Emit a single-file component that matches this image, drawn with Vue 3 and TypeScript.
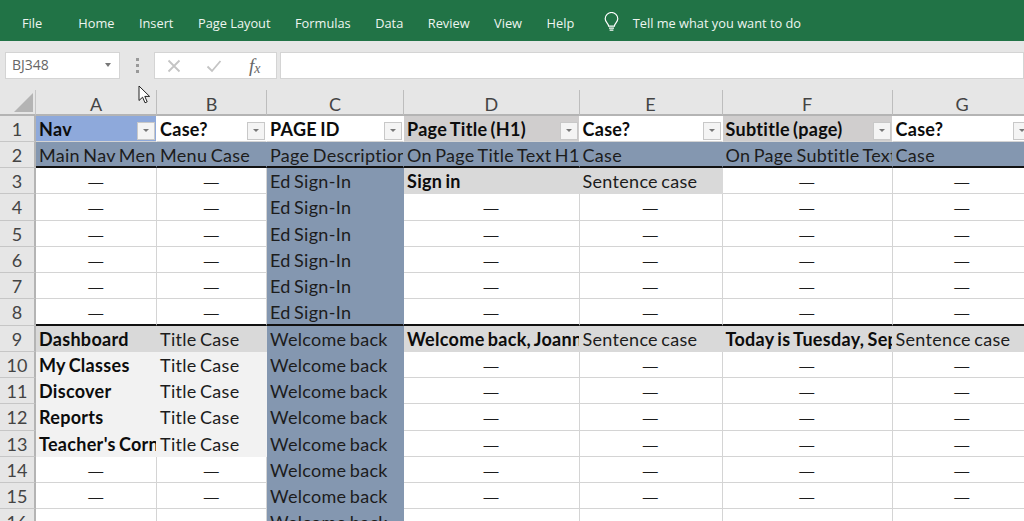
<script setup lang="ts">
type Cell = { t?: string; cls?: string };
const D = '—';
const columns = ['A', 'B', 'C', 'D', 'E', 'F', 'G'];
const tabs = ['Home', 'Insert', 'Page Layout', 'Formulas', 'Data', 'Review', 'View', 'Help'];

function c(t: string, cls = ''): Cell {
  return { t, cls };
}
function dash(): Cell {
  return c(D, 'ctr');
}
function blank(page: string): Cell[] {
  return [dash(), dash(), c(page, 'blue'), dash(), dash(), dash(), dash()];
}
function nav(label: string, page: string, strong = false): Cell[] {
  const tone = strong ? 'gray' : 'light';
  return [
    c(label, `b ${tone}`),
    c('Title Case', tone),
    c(page, 'blue'),
    ...(strong
      ? [c('Welcome back, Joanne', 'b gray'), c('Sentence case', 'gray'), c('Today is Tuesday, September', 'b gray'), c('Sentence case', 'gray')]
      : [dash(), dash(), dash(), dash()]),
  ];
}

const rows: Cell[][] = [
  [c('Nav', 'b head nav'), c('Case?', 'b head'), c('PAGE ID', 'b head'), c('Page Title (H1)', 'b head mid'), c('Case?', 'b head'), c('Subtitle (page)', 'b head mid'), c('Case?', 'b head')],
  ['Main Nav Menu', 'Menu Case', 'Page Description', 'On Page Title Text H1', 'Case', 'On Page Subtitle Text', 'Case'].map((t) => c(t, 'blue line')),
  [dash(), dash(), c('Ed Sign-In', 'blue'), c('Sign in', 'b gray'), c('Sentence case', 'gray'), dash(), dash()],
  blank('Ed Sign-In'),
  blank('Ed Sign-In'),
  blank('Ed Sign-In'),
  blank('Ed Sign-In'),
  blank('Ed Sign-In').map((x) => ({ ...x, cls: `${x.cls} line` })),
  nav('Dashboard', 'Welcome back', true),
  nav('My Classes', 'Welcome back'),
  nav('Discover', 'Welcome back'),
  nav('Reports', 'Welcome back'),
  nav("Teacher's Corner", 'Welcome back'),
  blank('Welcome back'),
  blank('Welcome back'),
  [c(''), c(''), c('Welcome back', 'blue'), c(''), c(''), c(''), c('')],
];
</script>

<template>
  <div class="app">
    <header class="ribbon">
      <span class="file">File</span>
      <span v-for="t in tabs" :key="t" class="tab">{{ t }}</span>
      <svg class="bulb" width="17" height="20" viewBox="0 0 17 20" fill="none" stroke="#fff" stroke-width="1.2">
        <path d="M5.6 14.2c0-2.4-3.4-3.9-3.4-7.4a6.3 6.3 0 0 1 12.6 0c0 3.5-3.4 5-3.4 7.4z" />
        <path d="M6 16.2h5M6.6 18.2h3.8" />
      </svg>
      <span class="tell">Tell me what you want to do</span>
    </header>

    <section class="formula">
      <div class="namebox">
        <span>BJ348</span>
        <i class="caret"></i>
      </div>
      <div class="grip"><b></b><b></b><b></b></div>
      <div class="fxbox">
        <svg width="14" height="14" viewBox="0 0 14 14" stroke="#c4c4c4" stroke-width="1.8" fill="none">
          <path d="M1.5 1.5l11 11M12.5 1.5l-11 11" />
        </svg>
        <svg width="16" height="14" viewBox="0 0 16 14" stroke="#c4c4c4" stroke-width="1.8" fill="none">
          <path d="M1.5 7.5l4.5 4.5 8.5-10" />
        </svg>
        <span class="fx">f<sub>x</sub></span>
      </div>
      <div class="input"></div>
    </section>

    <section class="sheet">
      <div class="corner"><i></i></div>
      <div v-for="col in columns" :key="col" class="colhead">{{ col }}</div>
      <template v-for="(row, r) in rows" :key="r">
        <div class="rowhead">{{ r + 1 }}</div>
        <div v-for="(cell, i) in row" :key="i" class="cell" :class="cell.cls">
          <span class="txt">{{ cell.t }}</span>
          <i v-if="r === 0" class="filter"><em></em></i>
        </div>
      </template>
    </section>

    <svg class="cursor" width="14" height="20" viewBox="0 0 14 20">
      <path d="M1 1v14.5l3.6-3.3 2.4 5.6 2.2-1-2.4-5.4h4.8z" fill="#fff" stroke="#222" stroke-width="1" />
    </svg>
  </div>
</template>

<style scoped>
.app {
  position: relative;
  width: 1024px;
  height: 521px;
  overflow: hidden;
  background: #e6e6e6;
  display: flex;
  flex-direction: column;
}
.ribbon {
  height: 41px;
  flex: none;
  box-sizing: border-box;
  background: #217346;
  color: #eef5f0;
  display: flex;
  align-items: center;
  padding: 5px 0 0 22px;
  font: 12.8px "Open Sans", sans-serif;
}
.file {
  margin-right: 36px;
}
.tab {
  margin-right: 24.5px;
}
.bulb {
  margin: -3px 13px 0 4px;
}
.formula {
  height: 49px;
  flex: none;
  box-sizing: border-box;
  padding: 11px 0 11px 5px;
  display: flex;
  align-items: stretch;
}
.namebox {
  width: 115px;
  box-sizing: border-box;
  background: #fff;
  border: 1px solid #d4d4d4;
  display: flex;
  align-items: center;
  justify-content: space-between;
  padding: 0 8px 2px 6px;
  color: #666;
  font: 14px "Open Sans", sans-serif;
}
.caret {
  border: 3.5px solid transparent;
  border-top: 4px solid #777;
  border-bottom: 0;
}
.grip {
  width: 34px;
  display: flex;
  flex-direction: column;
  align-items: center;
  justify-content: center;
  gap: 3px;
}
.grip b {
  width: 3px;
  height: 3px;
  background: #999;
}
.fxbox {
  width: 123px;
  box-sizing: border-box;
  background: #fff;
  border: 1px solid #d4d4d4;
  display: flex;
  align-items: center;
  gap: 25px;
  padding: 0 0 0 12px;
}
.fx {
  margin-left: 2px;
  font: italic 19px "Liberation Serif", serif;
  color: #666;
}
.fx sub {
  font-size: 14px;
  vertical-align: -1px;
}
.input {
  flex: 1;
  margin-left: 3px;
  background: #fff;
  border: 1px solid #d4d4d4;
}
.sheet {
  display: grid;
  grid-template-columns: 36px 121px 110px 137px 175.5px 143px 170px 140px;
  grid-template-rows: 25.5px;
  grid-auto-rows: 26.25px;
  background: #fff;
  font: 18px Lato, sans-serif;
  color: #1c1c1c;
}
.corner {
  background: #e6e6e6;
  border-right: 1px solid #c6c6c6;
  border-bottom: 2px solid #b4b4b4;
  box-sizing: border-box;
  position: relative;
}
.corner i {
  position: absolute;
  right: 2px;
  bottom: 2px;
  width: 0;
  height: 0;
  border-left: 19px solid transparent;
  border-bottom: 19px solid #b4b4b4;
}
.colhead {
  background: #e6e6e6;
  border-right: 1px solid #bdbdbd;
  border-bottom: 2px solid #b4b4b4;
  box-sizing: border-box;
  text-align: center;
  line-height: 28px;
  color: #444;
}
.rowhead {
  background: #e6e6e6;
  border-right: 2px solid #b4b4b4;
  border-bottom: 1px solid #c6c6c6;
  box-sizing: border-box;
  text-align: center;
  line-height: 27px;
  color: #444;
}
.cell {
  position: relative;
  box-sizing: border-box;
  overflow: hidden;
  white-space: nowrap;
  border-right: 1px solid #d4d4d4;
  border-bottom: 1px solid #d4d4d4;
  padding-left: 3px;
  line-height: 27px;
}
.txt {
  letter-spacing: 0.3px;
  word-spacing: -1.5px;
}
.b {
  font-weight: 700;
  color: #0c0c0c;
}
.ctr {
  text-align: center;
  padding-left: 0;
  font: 15px/27px "Liberation Sans", sans-serif;
}
.head {
  border-right-color: #fff;
}
.nav {
  background: #8ea9db;
}
.mid {
  background: #d0cece;
}
.blue {
  background: #8497b0;
  border-right-color: #8497b0;
  border-bottom-color: #8497b0;
}
.gray {
  background: #d9d9d9;
  border-right-color: #d9d9d9;
  border-bottom-color: #d9d9d9;
}
.light {
  background: #f2f2f2;
  border-right-color: #f2f2f2;
  border-bottom-color: #f2f2f2;
}
.line {
  border-bottom: 2px solid #111;
}
.filter {
  position: absolute;
  right: 1px;
  top: 6px;
  width: 18px;
  height: 18px;
  box-sizing: border-box;
  background: #f4f4f4;
  border: 1px solid #c8c8c8;
  display: flex;
  align-items: center;
  justify-content: center;
}
.filter em {
  border: 3px solid transparent;
  border-top: 3px solid #777;
  border-bottom: 0;
}
.cursor {
  position: absolute;
  left: 138px;
  top: 85px;
}
</style>
